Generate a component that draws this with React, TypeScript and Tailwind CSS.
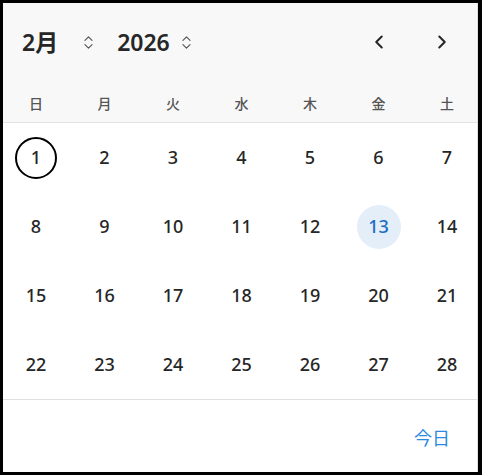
import { ChevronLeft, ChevronRight, ChevronsUpDown } from 'lucide-react';

const weekdays = ['日', '月', '火', '水', '木', '金', '土'];
const weeks = [
  [1, 2, 3, 4, 5, 6, 7],
  [8, 9, 10, 11, 12, 13, 14],
  [15, 16, 17, 18, 19, 20, 21],
  [22, 23, 24, 25, 26, 27, 28]
];

export default function App() {
  return (
    <div
      className="flex h-[475px] w-[482px] flex-col border-y-[3px] border-l-[3px] border-r-[4px] border-black bg-white text-[#262626]"
      style={{ fontFamily: '"Noto Sans", "Noto Sans CJK JP", sans-serif' }}
    >
      <div className="flex flex-1 flex-col border-r border-[#e0e0e0]">
        <header className="border-b border-[#e3e3e3] bg-[#f8f8f8]">
          <div className="flex h-[78px] items-center pl-[19px] pr-[24px]">
            <span className="text-[23px] font-semibold">2月</span>
            <ChevronsUpDown className="ml-[22px] h-[17px] w-[17px] text-[#555]" strokeWidth={1.6} />
            <span className="ml-[20px] text-[23px] font-semibold">2026</span>
            <ChevronsUpDown className="ml-[8px] h-[17px] w-[17px] text-[#555]" strokeWidth={1.6} />
            <div className="ml-auto flex items-center gap-[41px]">
              <ChevronLeft className="h-[22px] w-[22px]" strokeWidth={2.2} />
              <ChevronRight className="h-[22px] w-[22px]" strokeWidth={2.2} />
            </div>
          </div>
          <div className="flex h-[41px] items-start justify-between pl-[13px] pr-[10px] pt-[14px]">
            {weekdays.map((d) => (
              <span key={d} className="w-[40px] text-center text-[14px] font-medium leading-[18px] text-[#555]">
                {d}
              </span>
            ))}
          </div>
        </header>

        <div className="border-b border-[#e0e0e0]">
          {weeks.map((week, i) => (
            <div key={i} className="flex h-[69px] items-center justify-between pl-[13px] pr-[10px]">
              {week.map((n) => (
                <div key={n} className="flex w-[40px] justify-center">
                  {n === 1 ? (
                    <span className="flex h-[42px] w-[42px] shrink-0 items-center justify-center rounded-full border-2 border-black text-[18px] font-medium">
                      {n}
                    </span>
                  ) : n === 13 ? (
                    <span className="flex h-[44px] w-[44px] shrink-0 items-center justify-center rounded-full bg-[#e3eef9] text-[18px] font-medium text-[#1a6dc2]">
                      {n}
                    </span>
                  ) : (
                    <span className="flex h-[42px] items-center text-[18px] font-medium">{n}</span>
                  )}
                </div>
              ))}
            </div>
          ))}
        </div>

        <div className="flex flex-1 items-center justify-end pr-[27px] pt-[5px]">
          <span className="text-[18px] text-[#2b8ae0]">今日</span>
        </div>
      </div>
    </div>
  );
}
